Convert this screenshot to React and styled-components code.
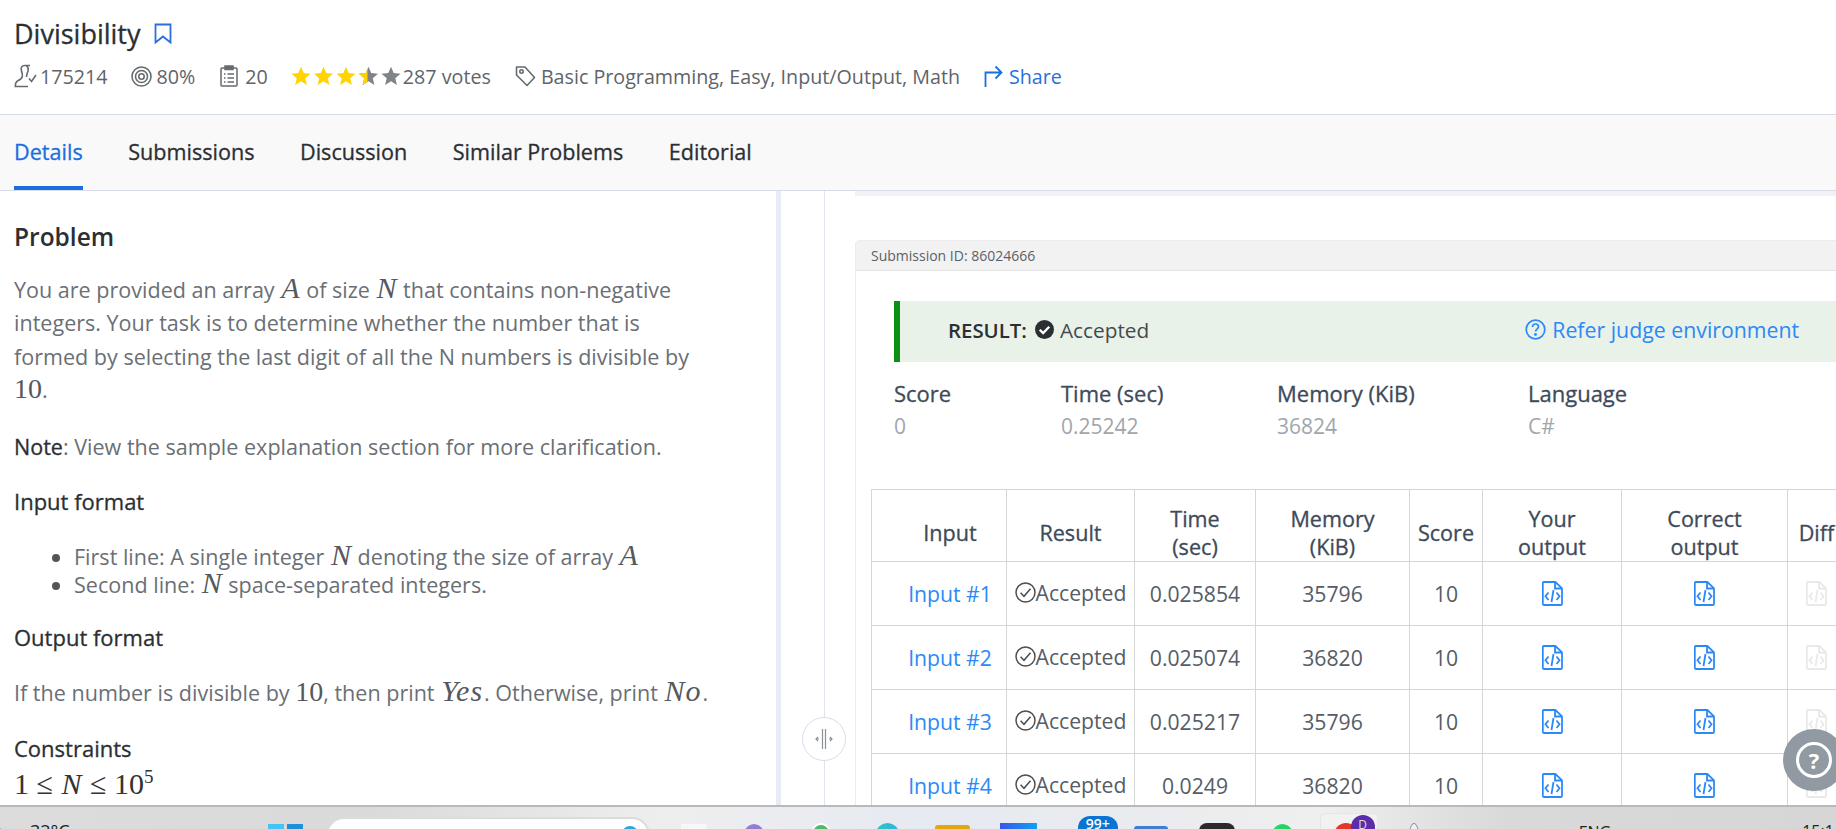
import React from "react";
import styled, { createGlobalStyle } from "styled-components";

const Global = createGlobalStyle`
  html, body { margin: 0; padding: 0; background: #fff; overflow: hidden; }
  body { font-family: "Open Sans", "Noto Sans", sans-serif; color: #2b2f33; }
  * { box-sizing: border-box; }
`;

const medium = "font-weight: 400; -webkit-text-stroke: 0.3px currentColor;";

const Page = styled.div`
  width: 1836px; height: 829px; display: flex; flex-direction: column; overflow: hidden;
`;
const Header = styled.header`
  height: 115px; padding: 19px 14px 0; background: #fff; border-bottom: 1px solid #d7dde6; flex: none;
`;
const TitleRow = styled.div`
  display: flex; align-items: center; gap: 12px; height: 29px;
`;
const Title = styled.h1`
  margin: 0; font-size: 27px; ${medium} line-height: 29px; color: #2b2f33;
`;
const MetaRow = styled.div`
  display: flex; align-items: center; height: 28px; margin-top: 14px; font-size: 19.7px; color: #5f6469;
`;
const MetaItem = styled.span`
  display: inline-flex; align-items: center; gap: ${p => p.$gap ?? 5}px; margin-left: ${p => p.$ml ?? 0}px; white-space: nowrap;
`;
const ShareLink = styled(MetaItem)`color: #2a6fdb;`;
const Tabs = styled.nav`
  height: 76px; flex: none; display: flex; gap: 45.5px; padding: 0 14px; background: #f9f9fa; border-bottom: 1px solid #d7dde6;
`;
const Tab = styled.a`
  height: 75px; display: flex; align-items: center; font-size: 21.6px; ${medium}
  color: ${p => p.$active ? "#1a6fe0" : "#2b2f33"};
  border-bottom: 4px solid ${p => p.$active ? "#1a6fe0" : "transparent"};
  padding-top: 1px;
`;
const Main = styled.main`
  flex: 1; min-height: 0; display: flex; position: relative; overflow: hidden;
`;
const LeftPane = styled.section`
  width: 776px; flex: none; padding: 31px 14px 0; overflow: hidden;
`;
const Divider = styled.div`
  width: 5px; flex: none; background: #e8ebf3;
`;
const Gutter = styled.div`
  width: 44px; flex: none; border-right: 1px solid #dfe2ef;
`;
const RightPane = styled.section`
  flex: 1; min-width: 0; padding-left: 30px; overflow: hidden;
`;
const TopBand = styled.div`
  height: 5px; background: #f0f2f7; width: 1100px;
`;
const Heading = styled.h2`
  margin: 0; font-size: 24.5px; font-weight: 600; line-height: 30px; color: #2b2f33;
`;
const Para = styled.p`
  margin: ${p => p.$mt ?? 0}px 0 0; width: 700px; font-size: 21.55px; line-height: 33.4px; color: #6a6f75;
  white-space: ${p => p.$nowrap ? "nowrap" : "normal"};
`;
const Strong = styled.strong`
  ${medium} color: #2b2f33;
`;
const Sub = styled.h3`
  margin: ${p => p.$mt ?? 0}px 0 0; font-size: 22px; ${medium} line-height: 28px; color: #2b2f33;
`;
const List = styled.ul`
  margin: 28px 0 0; padding: 0 0 0 60px; list-style: disc; font-size: 21.55px; line-height: 28px; color: #6a6f75;
  li::marker { color: #555; }
`;
const M = styled.span`
  font-family: "Liberation Serif", "Times New Roman", serif; font-style: italic; font-size: 30px; color: #55595e;
  line-height: 0; padding: 0 1px; letter-spacing: ${p => p.$ls ?? 0}px;
`;
const Num = styled.span`
  font-family: "Liberation Serif", "Times New Roman", serif; font-size: 28px; color: #55595e; line-height: 0;
`;
const Formula = styled.div`
  margin-top: 5px; font-family: "Liberation Serif", serif; font-size: 30px; line-height: 34px; color: #333;
  sup { font-size: 19px; line-height: 0; }
  i { padding: 0 1px; }
`;
const Card = styled.article`
  margin-top: 44px; width: 1100px; border: 1px solid #ececec; border-radius: 4px 0 0 0;
`;
const CardHead = styled.div`
  height: 30px; padding-left: 15px; display: flex; align-items: center; background: #f2f2f2;
  border-bottom: 1px solid #e4e4e4; font-size: 14px; color: #5c6166;
`;
const CardBody = styled.div`
  padding: 30px 0 0 15px;
`;
const Banner = styled.div`
  height: 61px; margin-left: 23px; padding: 0 0 4px 48px; width: 1060px; display: flex; align-items: center; background: #e8f2e8;
  border-left: 6px solid #0b8f14; font-size: 20.8px; color: #45494d;
`;
const ResultLabel = styled.strong`
  font-size: 20.4px; font-weight: 600; color: #2b2f33; margin-right: 8px;
`;
const ResultValue = styled.span`
  margin-left: 6px;
`;
const JudgeLink = styled.a`
  margin-left: 376px; display: inline-flex; align-items: center; gap: 6px; color: #2c89f5; font-size: 21.3px;
`;
const Stats = styled.dl`
  margin: 16px 0 0 23px; display: flex;
`;
const Stat = styled.div`
  width: ${p => p.$w}px;
  dt { font-size: 22px; ${medium} line-height: 30px; color: #3e4a59; }
  dd { margin: 3px 0 0; font-size: 21px; line-height: 30px; color: #a1a6ab; }
`;
const Table = styled.table`
  margin-top: 48px; border-collapse: collapse; table-layout: fixed; width: 974px; font-size: 21.2px; color: #555d66;
  th, td { border: 1px solid #d6d6d6; text-align: center; }
  th { height: 72px; padding: 14px 2px 0; font-size: 21.6px; ${medium} line-height: 28px; color: #3e4a59; vertical-align: middle; }
  td { height: 64px; padding: 0; }
`;
const InputTh = styled.th`
  && { padding-left: 24px; }
`;
const InputLink = styled.td`
  && { padding-left: 22px; color: #2c89f5; white-space: nowrap; }
`;
const ResultCell = styled.span`
  display: inline-flex; align-items: center; gap: 0; white-space: nowrap;
`;
const IconCell = styled.span`
  display: inline-flex; position: relative; top: 3px;
`;
const HandleButton = styled.div`
  position: absolute; left: 802px; top: 526px; width: 44px; height: 44px; border-radius: 50%;
  background: #fff; border: 1px solid #d9dcec; display: flex; align-items: center; justify-content: center;
`;
const Help = styled.div`
  position: absolute; left: 1783px; top: 538px; width: 62px; height: 62px; border-radius: 50%;
  background: #919aa3; display: flex; align-items: center; justify-content: center;
`;
const HelpRing = styled.div`
  width: 36px; height: 36px; border: 3px solid #fff; border-radius: 50%; display: flex; align-items: center; justify-content: center;
  color: #fff; font-weight: 700; font-size: 22px; line-height: 1;
`;
const Taskbar = styled.footer`
  height: 24px; flex: none; display: flex; overflow: hidden; border-top: 2px solid #b9b9b9;
  background: linear-gradient(90deg, #dcdcdc 0%, #dadada 20%, #eeeeee 36%, #e6eaf1 50%, #e9ebee 62%, #efefef 72%, #d9d9d9 82%, #d6d6d6 100%);
`;
const Tray = styled.div`
  flex: none; margin-left: ${p => p.$ml}px; margin-top: ${p => p.$mt}px; width: ${p => p.$w}px; height: 40px;
  background: ${p => p.$bg}; border-radius: ${p => p.$r ?? 0}; border: ${p => p.$border ?? "none"};
  display: flex; justify-content: center; overflow: visible;
`;
const SearchBox = styled(Tray)`
  justify-content: flex-end; padding-right: 10px;
`;
const SearchDot = styled.span`
  width: 16px; height: 16px; margin-top: 7px; border-radius: 50%; background: #2aa5e0;
`;
const TrayText = styled.span`
  flex: none; margin-left: ${p => p.$ml}px; margin-top: ${p => p.$mt}px; font-size: ${p => p.$fs ?? 17}px; line-height: 20px; color: #222; white-space: nowrap;
`;
const Badge = styled.span`
  font-size: 14px; font-weight: 600; color: #fff; line-height: 16px;
`;
const AvatarTile = styled.div`
  flex: none; margin-left: ${p => p.$ml}px; margin-top: 6px; width: 58px; height: 40px; background: #f1f1f1; border-radius: 5px 5px 0 0;
  border: 1px solid #e6e6e6; display: flex; padding: 9px 0 0 13px;
`;
const RedDot = styled.span`
  width: 24px; height: 24px; border-radius: 50%; background: #e0392b;
`;
const PurpleDot = styled.span`
  width: 24px; height: 24px; margin: -8px 0 0 -7px; border-radius: 50%; background: #5b2da8; color: #ddd; font-size: 12px; text-align: center; line-height: 20px;
`;

const Bookmark = () => (
  <svg width="20" height="21" viewBox="0 0 20 21" fill="none" stroke="#2a6fdb" strokeWidth="1.8">
    <path d="M2.500 1.500h15v18l-7.500-6-7.500 6z" />
  </svg>
);
const Solver = () => (
  <svg width="23" height="24" viewBox="0 0 23 24" fill="none" stroke="#666b70" strokeWidth="1.6">
    <path d="M16 1.500H10.500C7.800 1.500 6.800 3.500 7.300 6c.5 2.500 1.500 4 1 6.500C7.800 15 5.500 16 3.500 17 2 17.800 1.300 19.500 1.300 22.500H14" />
    <path d="M12.500 1.700c1.500 1.300 2 3.300 1.500 5.300-.6 2-1.500 3.500-1.500 6" />
    <path d="M15 14.500l2.500 3 4.500-6.500" />
  </svg>
);
const Target = () => (
  <svg width="21" height="21" viewBox="0 0 21 21" fill="none" stroke="#666b70" strokeWidth="1.6">
    <circle cx="10.500" cy="10.500" r="9.500" />
    <circle cx="10.500" cy="10.500" r="6" />
    <circle cx="10.500" cy="10.500" r="2.700" />
  </svg>
);
const Clip = () => (
  <svg width="18" height="22" viewBox="0 0 18 22" fill="none" stroke="#666b70" strokeWidth="1.5">
    <rect x="1" y="3" width="16" height="18" rx="1" />
    <path d="M5 1h8v3.500H5z" fill="#666b70" />
    <path d="M4 9h1.500M7.500 9H14M4 13h1.500M7.500 13H14M4 17h1.500M7.500 17H14" />
  </svg>
);
const starPath = "M10 .8l2.700 6.300 6.800.6-5.200 4.500 1.600 6.700L10 15.300l-5.900 3.600 1.600-6.700L.5 7.700l6.800-.6z";
const Stars = () => (
  <svg width="111" height="20" viewBox="0 0 111 20">
    <defs>
      <clipPath id="halfStar"><rect x="0" y="0" width="9" height="20" /></clipPath>
    </defs>
    {[0, 22.500, 45, 67.500, 90].map((x, i) => (
      <path key={x} d={starPath} transform={`translate(${x} 0)`} fill={i < 3 ? "#ffd400" : "#808387"} />
    ))}
    <g transform="translate(67.500 0)">
      <path d={starPath} fill="#ffd400" clipPath="url(#halfStar)" />
    </g>
  </svg>
);
const Tag = () => (
  <svg width="21" height="22" viewBox="0 0 21 22" fill="none" stroke="#666b70" strokeWidth="1.6">
    <path d="M1.500 2h8.500l9.500 10.500-7.500 8L1.500 10z" strokeLinejoin="round" />
    <circle cx="6.500" cy="6.500" r="1.700" />
  </svg>
);
const Share = () => (
  <svg width="19" height="22" viewBox="0 0 19 22" fill="none" stroke="#1a6fe0" strokeWidth="1.8">
    <path d="M1.500 22V7.500H17M11.500 1.500l6 6-6 6" />
  </svg>
);
const Solid = () => (
  <svg width="19" height="19" viewBox="0 0 18 18">
    <circle cx="9" cy="9" r="9" fill="#2b2f33" />
    <path d="M4.500 9.200l3.200 3.200 5.800-6" fill="none" stroke="#fff" strokeWidth="2.200" />
  </svg>
);
const QuestionCircle = () => (
  <svg width="21" height="21" viewBox="0 0 21 21" fill="none" stroke="#2c89f5" strokeWidth="1.700">
    <circle cx="10.500" cy="10.500" r="9.300" />
    <path d="M7.500 8c0-1.800 1.400-3 3-3s3 1.200 3 2.800c0 2.200-3 2.400-3 4.700" />
    <circle cx="10.500" cy="15.500" r=".6" fill="#2c89f5" />
  </svg>
);
const CheckCircle = () => (
  <svg width="21" height="21" viewBox="0 0 21 21" fill="none" stroke="#4a4f55" strokeWidth="1.500">
    <circle cx="10.500" cy="10.500" r="9.500" />
    <path d="M5.500 10.800l3.500 3.500 6.500-7.500" />
  </svg>
);
const FileCode = ({ color = "#2c89f5" }) => (
  <svg width="21" height="25" viewBox="0 0 21 25" fill="none" stroke={color} strokeWidth="1.800">
    <path d="M1.800 1h11.500l6.700 6.300v15.400a1.300 1.300 0 0 1-1.300 1.300H1.800a1.300 1.300 0 0 1-1-1.300V2.200A1.300 1.300 0 0 1 1.800 1z" />
    <path d="M13 1v6.500h7" />
    <path d="M6.500 11.500l-3 3.800 3 3.700M14.500 11.500l3 3.800-3 3.700M11.500 9l-2 12" />
  </svg>
);
const HandleIcon = () => (
  <svg width="18" height="22" viewBox="0 0 18 22" fill="none" stroke="#8a8f98" strokeWidth="1.200">
    <path d="M7.500 1v20M10.500 1v20" />
    <path d="M1 11h3M14 11h3" />
    <path d="M3 9l-2 2 2 2M15 9l2 2-2 2" />
  </svg>
);

const rows = [
  ["Input #1", "0.025854", "35796"],
  ["Input #2", "0.025074", "36820"],
  ["Input #3", "0.025217", "35796"],
  ["Input #4", "0.0249", "36820"],
];
const colWidths = [135, 128, 121, 154, 73, 139, 166, 58];

export default function App() {
  return (
    <Page>
      <Global />
      <Header>
        <TitleRow>
          <Title>Divisibility</Title>
          <Bookmark />
        </TitleRow>
        <MetaRow>
          <MetaItem $gap={3}><Solver />175214</MetaItem>
          <MetaItem $ml={23}><Target />80%</MetaItem>
          <MetaItem $ml={25} $gap={7}><Clip />20</MetaItem>
          <MetaItem $ml={23} $gap={1}><Stars />287 votes</MetaItem>
          <MetaItem $ml={24}><Tag />Basic Programming, Easy, Input/Output, Math</MetaItem>
          <ShareLink $ml={24} $gap={6}><Share />Share</ShareLink>
        </MetaRow>
      </Header>
      <Tabs>
        <Tab $active>Details</Tab>
        <Tab>Submissions</Tab>
        <Tab>Discussion</Tab>
        <Tab>Similar Problems</Tab>
        <Tab>Editorial</Tab>
      </Tabs>
      <Main>
        <LeftPane>
          <Heading>Problem</Heading>
          <Para $mt={21}>
            You are provided an array <M>A</M> of size <M>N</M> that contains non-negative integers. Your task is to determine whether the number that is formed by selecting the last digit of all the N numbers is divisible by <Num>10</Num>.
          </Para>
          <Para $mt={23}><Strong>Note</Strong>: View the sample explanation section for more clarification.</Para>
          <Sub $mt={24}>Input format</Sub>
          <List>
            <li>First line: A single integer <M>N</M> denoting the size of array <M>A</M></li>
            <li>Second line: <M>N</M> space-separated integers.</li>
          </List>
          <Sub $mt={24}>Output format</Sub>
          <Para $mt={25} $nowrap>If the number is divisible by <Num>10</Num>, then print <M $ls={1}>Yes</M>. Otherwise, print <M $ls={1}>No</M>.</Para>
          <Sub $mt={25}>Constraints</Sub>
          <Formula>1 ≤ <i>N</i> ≤ 10<sup>5</sup></Formula>
        </LeftPane>
        <Divider />
        <Gutter />
        <RightPane>
          <TopBand />
          <Card>
            <CardHead>Submission ID: 86024666</CardHead>
            <CardBody>
              <Banner>
                <ResultLabel>RESULT:</ResultLabel>
                <Solid />
                <ResultValue>Accepted</ResultValue>
                <JudgeLink><QuestionCircle />Refer judge environment</JudgeLink>
              </Banner>
              <Stats>
                <Stat $w={167}><dt>Score</dt><dd>0</dd></Stat>
                <Stat $w={216}><dt>Time (sec)</dt><dd>0.25242</dd></Stat>
                <Stat $w={251}><dt>Memory (KiB)</dt><dd>36824</dd></Stat>
                <Stat $w={200}><dt>Language</dt><dd>C#</dd></Stat>
              </Stats>
              <Table>
                <colgroup>
                  {colWidths.map((w, i) => <col key={i} width={w} />)}
                </colgroup>
                <thead>
                  <tr>
                    <InputTh>Input</InputTh>
                    <th>Result</th>
                    <th>Time<br />(sec)</th>
                    <th>Memory<br />(KiB)</th>
                    <th>Score</th>
                    <th>Your<br />output</th>
                    <th>Correct<br />output</th>
                    <th>Diff</th>
                  </tr>
                </thead>
                <tbody>
                  {rows.map(([name, time, mem]) => (
                    <tr key={name}>
                      <InputLink>{name}</InputLink>
                      <td><ResultCell><CheckCircle />Accepted</ResultCell></td>
                      <td>{time}</td>
                      <td>{mem}</td>
                      <td>10</td>
                      <td><IconCell><FileCode /></IconCell></td>
                      <td><IconCell><FileCode /></IconCell></td>
                      <td><IconCell><FileCode color="#e9e9e9" /></IconCell></td>
                    </tr>
                  ))}
                </tbody>
              </Table>
            </CardBody>
          </Card>
        </RightPane>
        <HandleButton><HandleIcon /></HandleButton>
        <Help><HelpRing>?</HelpRing></Help>
      </Main>
      <Taskbar>
        <Tray $ml={-20} $mt={19} $w={28} $bg="#6aa6e0" $r="50%" />
        <TrayText $ml={22} $mt={14} $fs={18}>32°C</TrayText>
        <Tray $ml={198} $mt={17} $w={35} $bg="linear-gradient(90deg,#45c3f2 0 47%,transparent 47% 53%,#1f8fdc 53%)" />
        <SearchBox $ml={23} $mt={10} $w={324} $bg="#fff" $r="18px" $border="2px solid #dcdcdc"><SearchDot /></SearchBox>
        <Tray $ml={31} $mt={17} $w={26} $bg="#f7f7f7" />
        <Tray $ml={34} $mt={17} $w={26} $bg="linear-gradient(135deg,#a07fd0,#6d7cc8)" $r="50%" />
        <Tray $ml={41} $mt={16} $w={26} $bg="#4cba6a" $r="50%" $border="2px solid #fff" />
        <Tray $ml={39} $mt={16} $w={29} $bg="linear-gradient(90deg,#2ec7c0,#2fb4e0)" $r="50%" />
        <Tray $ml={33} $mt={18} $w={35} $bg="#e4a50e" $r="3px" />
        <Tray $ml={30} $mt={16} $w={37} $bg="linear-gradient(90deg,#3656e8,#12a0f5)" />
        <Tray $ml={41} $mt={9} $w={40} $bg="#0a74d0" $r="12px"><Badge>99+</Badge></Tray>
        <Tray $ml={16} $mt={19} $w={34} $bg="#3f7fd0" $r="3px" />
        <Tray $ml={31} $mt={16} $w={36} $bg="#2a2a2a" $r="8px" />
        <Tray $ml={34} $mt={17} $w={27} $bg="#25d366" $r="50%" />
        <AvatarTile $ml={24}><RedDot /><PurpleDot>D</PurpleDot></AvatarTile>
        <Tray $ml={30} $mt={16} $w={12} $bg="#eef0f4" $r="50%" $border="1.500px solid #8a8f9c" />
        <TrayText $ml={159} $mt={15} $fs={16}>ENG</TrayText>
        <TrayText $ml={191} $mt={14} $fs={16}>15:1</TrayText>
      </Taskbar>
    </Page>
  );
}
